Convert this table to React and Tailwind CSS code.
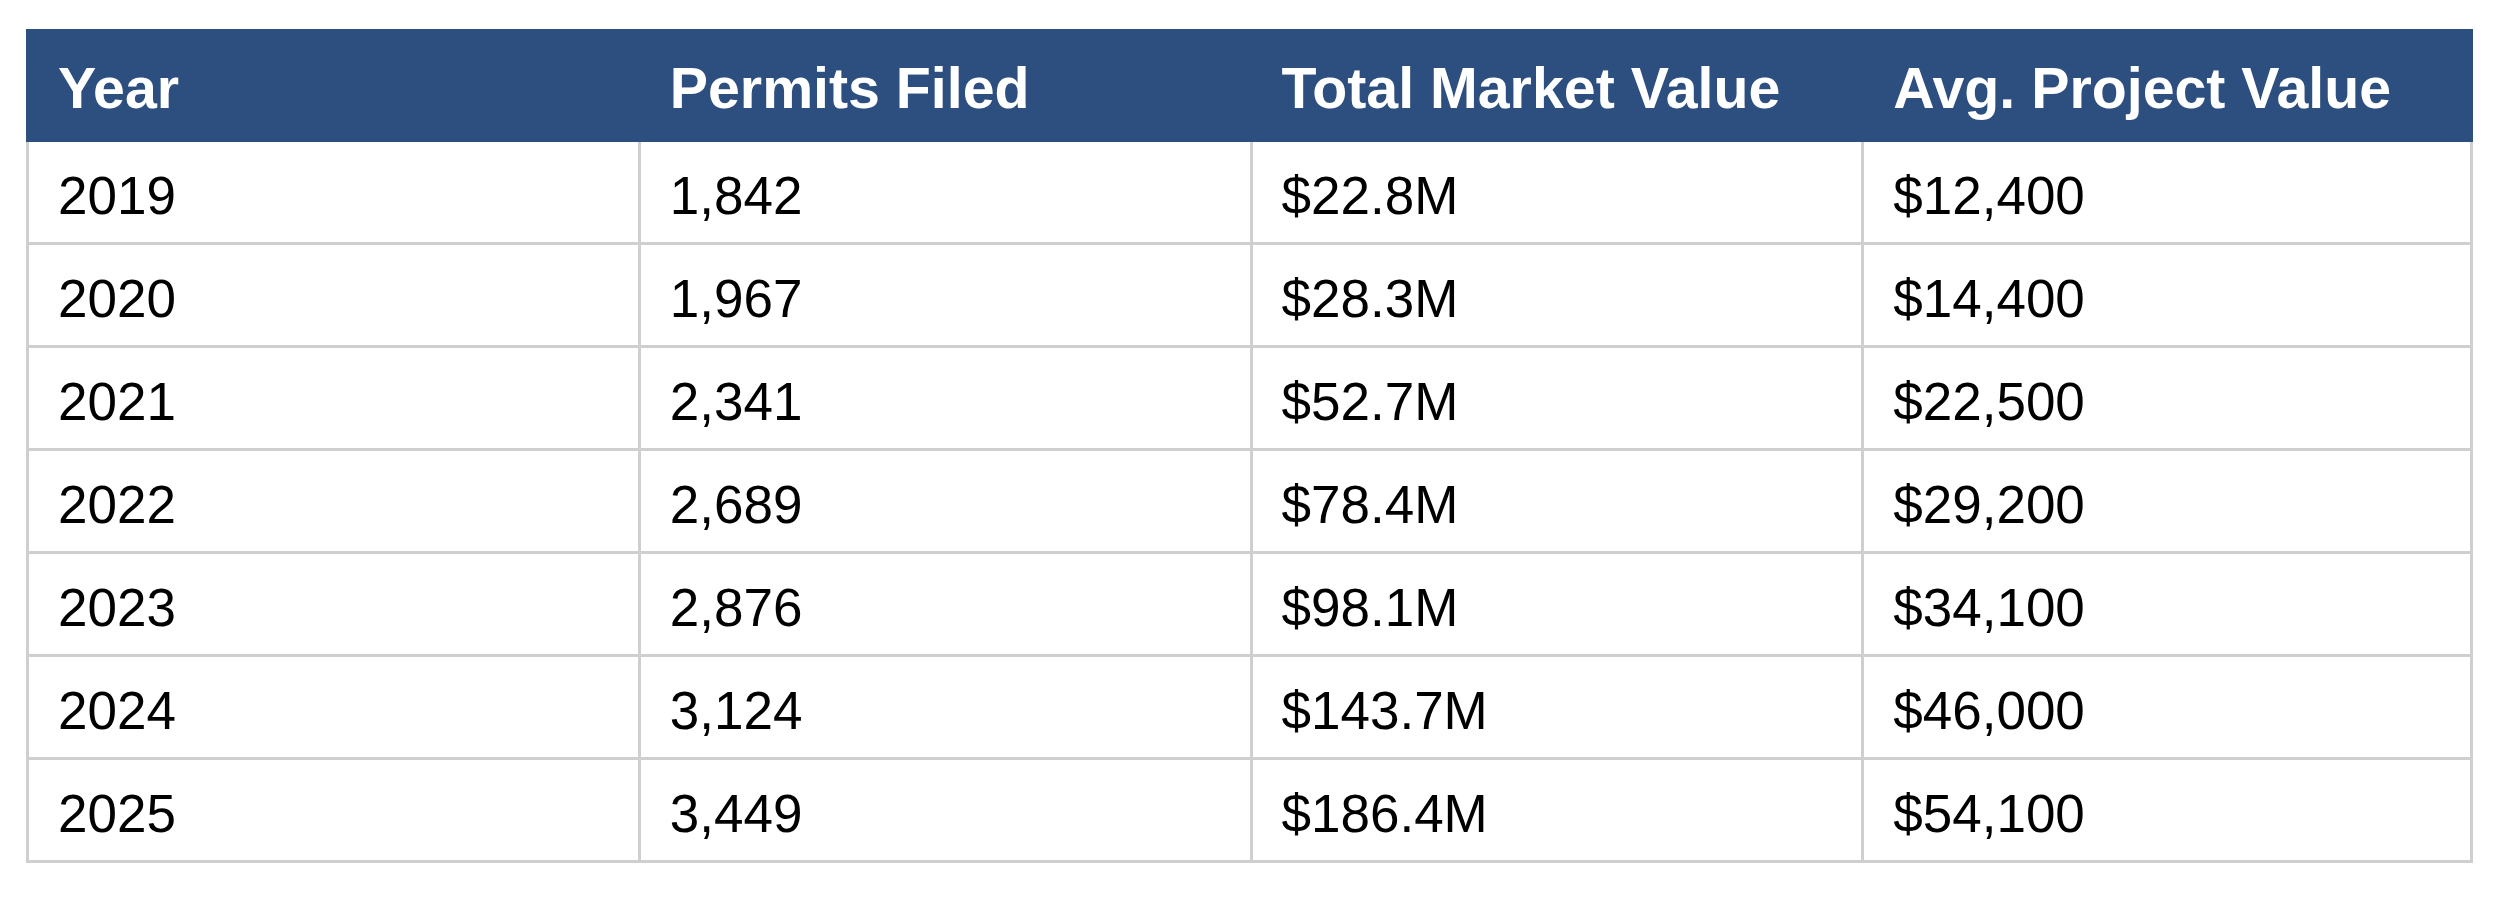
const headers = ['Year', 'Permits Filed', 'Total Market Value', 'Avg. Project Value']

const rows = [
  ['2019', '1,842', '$22.8M', '$12,400'],
  ['2020', '1,967', '$28.3M', '$14,400'],
  ['2021', '2,341', '$52.7M', '$22,500'],
  ['2022', '2,689', '$78.4M', '$29,200'],
  ['2023', '2,876', '$98.1M', '$34,100'],
  ['2024', '3,124', '$143.7M', '$46,000'],
  ['2025', '3,449', '$186.4M', '$54,100'],
]

const App = () => {
  return (
    <div className="w-[2500px] h-[899px] bg-white pt-[29px] pl-[26px] font-['Liberation_Sans',Arial,sans-serif]">
      <div className="w-[2447px]">
        <div className="grid grid-cols-4 h-[113px] bg-[#2c4f80]">
          {headers.map((h) => (
            <div
              key={h}
              className="flex items-center pl-[32px] pt-[6px] text-[57.3px] leading-none font-bold text-white"
            >
              {h}
            </div>
          ))}
        </div>
        {rows.map((row) => (
          <div key={row[0]} className="grid grid-cols-4">
            {row.map((cell, i) => (
              <div
                key={i}
                className={
                  'flex items-center h-[103px] border-b-[3px] border-l-[3px] border-[#cfcfcf] pl-[29px] pt-[7px] text-[53px] leading-none text-black' +
                  (i === 3 ? ' border-r-[3px]' : '')
                }
              >
                {cell}
              </div>
            ))}
          </div>
        ))}
      </div>
    </div>
  )
}

export default App
